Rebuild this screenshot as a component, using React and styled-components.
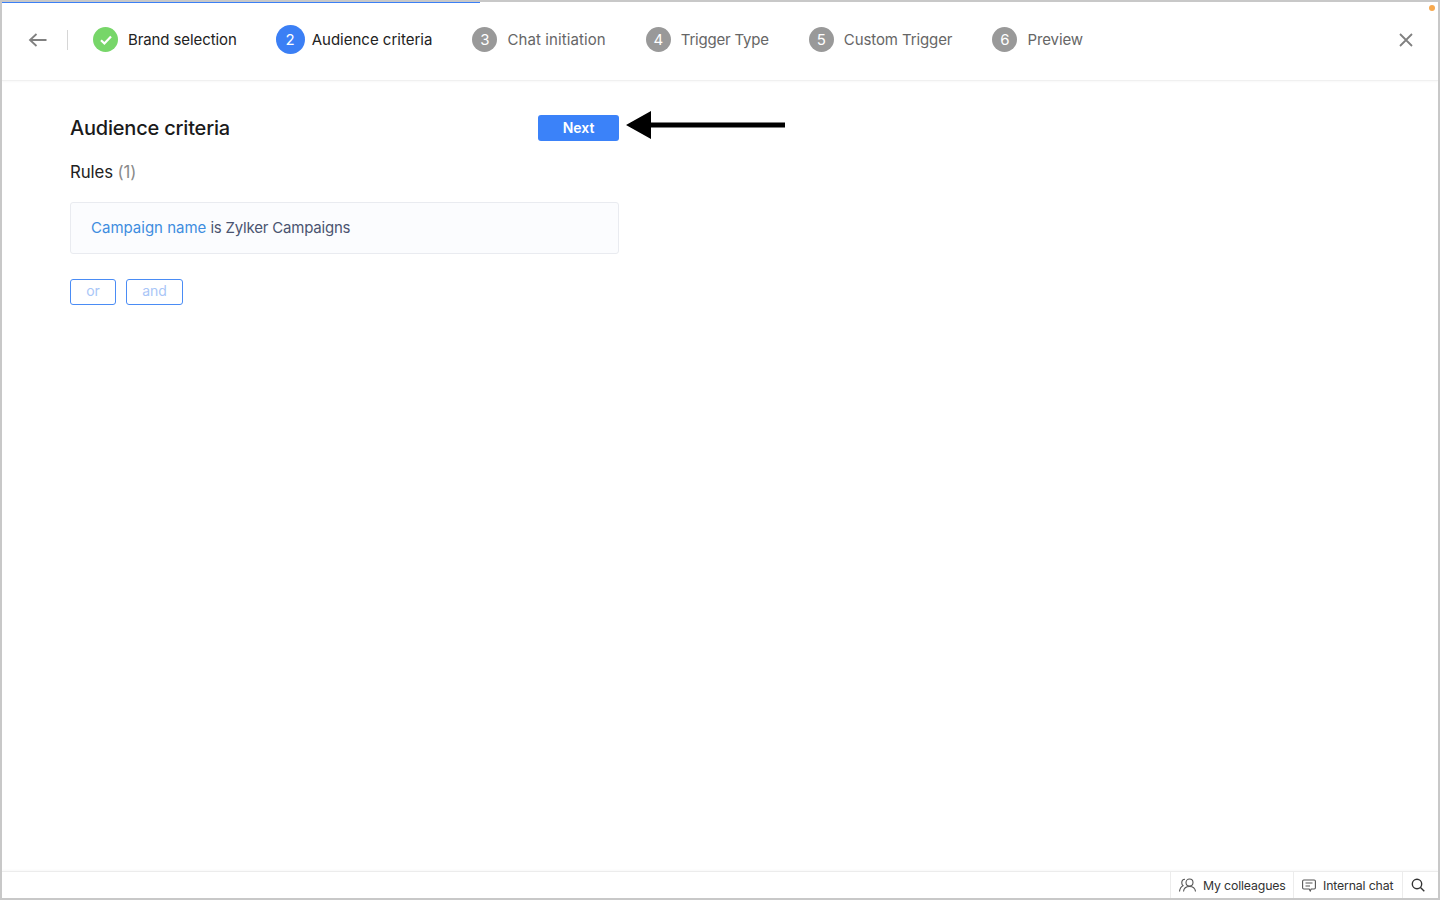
import styled, { createGlobalStyle } from "styled-components";

const steps = [
  { label: "Brand selection", state: "done", gap: 39, ls: -0.1 },
  { label: "Audience criteria", num: 2, state: "active", gap: 40, ls: 0 },
  { label: "Chat initiation", num: 3, gap: 40, ls: 0.1 },
  { label: "Trigger Type", num: 4, gap: 40, ls: -0.2 },
  { label: "Custom Trigger", num: 5, gap: 40, ls: -0.1 },
  { label: "Preview", num: 6, gap: 0, ls: -0.1 },
];

export default function App() {
  return (
    <>
      <Global />
      <Frame>
        <Progress />
        <Dot />
        <Header>
          <BackBtn aria-label="Back">
            <svg width="20" height="16" viewBox="0 0 20 16" fill="none" stroke="#808080" strokeWidth="1.8">
              <path d="M18.5 8H2M8.5 2L2 8l6.500 6" />
            </svg>
          </BackBtn>
          <Divider />
          <Steps>
            {steps.map((s) => (
              <Step key={s.label} $gap={s.gap}>
                <Badge $state={s.state}>
                  {s.state === "done" ? (
                    <svg width="14" height="12" viewBox="0 0 14 12" fill="none" stroke="#fff" strokeWidth="2.2">
                      <path d="M2 6.200l3.400 3.300L12 2.500" />
                    </svg>
                  ) : (
                    s.num
                  )}
                </Badge>
                <StepLabel $state={s.state} $ls={s.ls}>{s.label}</StepLabel>
              </Step>
            ))}
          </Steps>
          <CloseBtn aria-label="Close">
            <svg width="14" height="14" viewBox="0 0 14 14" fill="none" stroke="#808080" strokeWidth="1.8">
              <path d="M1 1l12 12M13 1L1 13" />
            </svg>
          </CloseBtn>
        </Header>

        <Main>
          <TitleRow>
            <Title>Audience criteria</Title>
            <NextBtn>Next</NextBtn>
            <Arrow width="160" height="30" viewBox="0 0 160 30" aria-hidden="true">
              <path d="M0 15L25 1v11.500h134v5H25V29z" fill="#000" />
            </Arrow>
          </TitleRow>
          <RulesHead>
            Rules <Count>(1)</Count>
          </RulesHead>
          <RuleCard>
            <RuleField>Campaign name</RuleField> is Zylker Campaigns
          </RuleCard>
          <Actions>
            <GhostBtn $w={46}>or</GhostBtn>
            <GhostBtn $w={57}>and</GhostBtn>
          </Actions>
        </Main>

        <Footer>
          <FootItem $w={123}>
            <svg width="17" height="14" viewBox="0 0 17 14" fill="none" stroke="#555" strokeWidth="1.100">
              <circle cx="10.500" cy="4.500" r="3.500" />
              <path d="M4.500 13.500c.3-2.800 2.500-5 6-5s5.700 2.200 6 5" />
              <path d="M6 1.300A3.500 3.500 0 0 0 2.800 5c0 1.100.5 2 1.200 2.700C2 8.700.8 10.800.5 13.500" />
            </svg>
            My colleagues
          </FootItem>
          <FootItem $w={109}>
            <svg width="14" height="14" viewBox="0 0 14 14" fill="none" stroke="#555" strokeWidth="1.100">
              <path d="M1.800 2h10.400a1.200 1.200 0 0 1 1.200 1.200v6.600a1.200 1.200 0 0 1-1.200 1.200H9.200l-1 2-1-2H1.800a1.200 1.200 0 0 1-1.200-1.200V3.200A1.200 1.200 0 0 1 1.800 2z" />
              <path d="M3.500 5h7M3.500 8h4.500" />
            </svg>
            Internal chat
          </FootItem>
          <SearchItem>
            <svg width="14" height="14" viewBox="0 0 14 14" fill="none" stroke="#333" strokeWidth="1.400">
              <circle cx="6" cy="6" r="4.700" />
              <path d="M9.500 9.500l3.800 3.800" />
            </svg>
          </SearchItem>
        </Footer>
      </Frame>
    </>
  );
}

const Global = createGlobalStyle`
  html, body { margin: 0; padding: 0; background: #fff; }
  body { font-family: Inter, "Noto Sans", "Liberation Sans", sans-serif; }
  * { box-sizing: border-box; }
`;

const Frame = styled.div`
  position: relative;
  width: 1440px;
  height: 900px;
  overflow: hidden;
  border: 2px solid #c8c8c8;
  background: #fff;
  display: flex;
  flex-direction: column;
`;

const Progress = styled.div`
  position: absolute;
  top: 0;
  left: 0;
  width: 478px;
  height: 1px;
  background: #3b7ff5;
`;

const Dot = styled.span`
  position: absolute;
  top: 3px;
  right: 3px;
  width: 6px;
  height: 6px;
  border-radius: 50%;
  background: #f7a94f;
`;

const Header = styled.header`
  height: 79px;
  flex: none;
  display: flex;
  align-items: center;
  padding: 0 25px 3px 26px;
  border-bottom: 1px solid #f0f0f0;
  box-shadow: 0 1px 2px rgba(0, 0, 0, 0.03);
`;

const BackBtn = styled.div`
  width: 20px;
  height: 16px;
  display: flex;
`;

const Divider = styled.div`
  width: 1px;
  height: 20px;
  margin: 0 25px 0 19px;
  background: #d6d6d6;
`;

const Steps = styled.div`
  display: flex;
  align-items: center;
  flex: 1;
`;

const Step = styled.div`
  display: flex;
  align-items: center;
  margin-right: ${(p) => p.$gap}px;
`;

const Badge = styled.span`
  width: ${(p) => (p.$state === "active" ? 29 : 25)}px;
  height: ${(p) => (p.$state === "active" ? 29 : 25)}px;
  margin-right: ${(p) => (p.$state === "active" ? 7 : 10)}px;
  border-radius: 50%;
  display: flex;
  align-items: center;
  justify-content: center;
  font-size: 15px;
  color: #fff;
  background: ${(p) =>
    p.$state === "done" ? "#77d669" : p.$state === "active" ? "#3b7ff5" : "#999"};
`;

const StepLabel = styled.span`
  font-size: 15px;
  letter-spacing: ${(p) => p.$ls}px;
  color: ${(p) => (p.$state ? "#222" : "#666")};
`;

const CloseBtn = styled.div`
  width: 14px;
  height: 14px;
  display: flex;
`;

const Main = styled.main`
  flex: 1;
  width: 549px;
  margin-left: 68px;
  padding-top: 33px;
`;

const TitleRow = styled.div`
  position: relative;
  height: 28px;
  display: flex;
  align-items: center;
  justify-content: space-between;
`;

const Title = styled.h1`
  margin: 0;
  font-size: 20px;
  font-weight: 500;
  letter-spacing: -0.2px;
  color: #1a1a1a;
`;

const NextBtn = styled.button`
  width: 81px;
  height: 26px;
  padding: 0 0 1px;
  border: 0;
  border-radius: 3px;
  background: #3b82f9;
  color: #fff;
  font: 600 14px Inter, sans-serif;
`;

const Arrow = styled.svg`
  position: absolute;
  left: 556px;
  top: -4px;
`;

const RulesHead = styled.div`
  margin-top: 20px;
  font-size: 16.800px;
  line-height: 20px;
  letter-spacing: -0.1px;
  color: #222;
`;

const Count = styled.span`
  color: #8a8a8a;
`;

const RuleCard = styled.div`
  height: 52px;
  margin-top: 20px;
  padding: 0 0 2px 20px;
  display: flex;
  align-items: center;
  white-space: pre;
  font-size: 15px;
  letter-spacing: -0.2px;
  color: #4a5470;
  background: #fbfcfe;
  border: 1px solid #e9ebf0;
  border-radius: 3px;
`;

const RuleField = styled.span`
  letter-spacing: 0;
  color: #3e8de0;
`;

const Actions = styled.div`
  display: flex;
  gap: 10px;
  margin-top: 25px;
`;

const GhostBtn = styled.button`
  width: ${(p) => p.$w}px;
  height: 26px;
  padding: 0 0 3px;
  background: #fff;
  border: 1px solid #4a8cf5;
  border-radius: 3px;
  color: #a9c6f7;
  font: 400 14px Inter, sans-serif;
`;

const Footer = styled.footer`
  height: 27px;
  flex: none;
  display: flex;
  justify-content: flex-end;
  border-top: 1px solid #ececec;
  box-shadow: 0 -1px 2px rgba(0, 0, 0, 0.03);
`;

const FootItem = styled.div`
  width: ${(p) => p.$w}px;
  display: flex;
  align-items: center;
  gap: 7px;
  padding-left: 8px;
  font-size: 12.300px;
  letter-spacing: -0.15px;
  color: #333;
  border-left: 1px solid #ececec;
`;

const SearchItem = styled.div`
  width: 36px;
  display: flex;
  align-items: center;
  justify-content: center;
  padding-right: 6px;
  border-left: 1px solid #ececec;
`;
